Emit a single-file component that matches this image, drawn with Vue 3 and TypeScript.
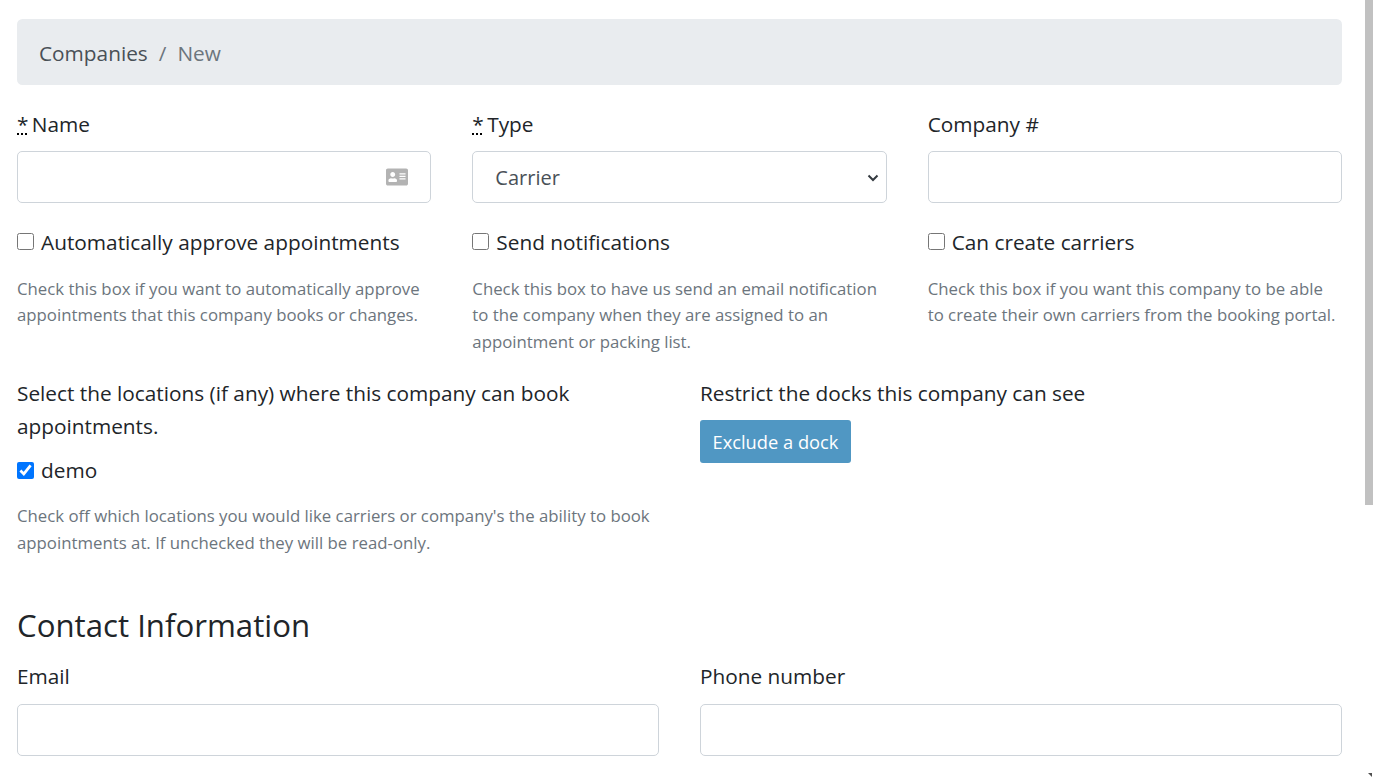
<script setup lang="ts">
const settings = [
  {
    id: 'auto',
    label: 'Automatically approve appointments',
    help: 'Check this box if you want to automatically approve appointments that this company books or changes.'
  },
  {
    id: 'notify',
    label: 'Send notifications',
    help: 'Check this box to have us send an email notification to the company when they are assigned to an appointment or packing list.'
  },
  {
    id: 'carriers',
    label: 'Can create carriers',
    help: 'Check this box if you want this company to be able to create their own carriers from the booking portal.'
  }
]
</script>

<template>
  <div class="page">
    <nav class="breadcrumb">
      <a class="crumb-link">Companies</a>
      <span class="crumb-sep">/</span>
      <span class="crumb-current">New</span>
    </nav>

    <form class="form">
      <div class="cols-3 top-fields">
        <div>
          <label class="field-label"><abbr title="required">*</abbr> Name</label>
          <div class="input-wrap">
            <input class="control" type="text" />
            <svg class="card-icon" viewBox="0 0 576 512">
              <path d="M528 32H48C21.5 32 0 53.5 0 80v352c0 26.5 21.5 48 48 48h480c26.5 0 48-21.5 48-48V80c0-26.5-21.5-48-48-48zm-352 96c35.3 0 64 28.7 64 64s-28.7 64-64 64-64-28.7-64-64 28.7-64 64-64zm112 236.8c0 10.6-10 19.2-22.4 19.2H86.4C74 384 64 375.4 64 364.8v-19.2c0-31.8 30.1-57.6 67.2-57.6h5c12.3 5.1 25.7 8 39.8 8s27.6-2.9 39.8-8h5c37.1 0 67.2 25.8 67.2 57.6v19.2zM512 312c0 4.4-3.6 8-8 8H360c-4.4 0-8-3.6-8-8v-16c0-4.4 3.6-8 8-8h144c4.4 0 8 3.6 8 8v16zm0-64c0 4.4-3.6 8-8 8H360c-4.4 0-8-3.6-8-8v-16c0-4.4 3.6-8 8-8h144c4.4 0 8 3.6 8 8v16zm0-64c0 4.4-3.6 8-8 8H360c-4.4 0-8-3.6-8-8v-16c0-4.4 3.6-8 8-8h144c4.4 0 8 3.6 8 8v16z" />
            </svg>
          </div>
        </div>
        <div>
          <label class="field-label"><abbr title="required">*</abbr> Type</label>
          <div class="input-wrap">
            <select class="control select">
              <option>Carrier</option>
            </select>
            <svg class="chevron" viewBox="0 0 12 8">
              <path d="M1.5 1.5 6 6l4.5-4.5" />
            </svg>
          </div>
        </div>
        <div>
          <label class="field-label">Company #</label>
          <input class="control" type="text" />
        </div>
      </div>

      <div class="cols-3 settings">
        <div v-for="item in settings" :key="item.id">
          <label class="check">
            <input type="checkbox" />
            <span>{{ item.label }}</span>
          </label>
          <small class="help">{{ item.help }}</small>
        </div>
      </div>

      <div class="cols-2 locations">
        <div>
          <label class="field-label">Select the locations (if any) where this company can book appointments.</label>
          <label class="check">
            <input type="checkbox" checked />
            <span>demo</span>
          </label>
          <small class="help location-help">Check off which locations you would like carriers or company's the ability to book appointments at. If unchecked they will be read-only.</small>
        </div>
        <div>
          <label class="field-label dock-label">Restrict the docks this company can see</label>
          <button class="btn" type="button">Exclude a dock</button>
        </div>
      </div>

      <h3 class="section-title">Contact Information</h3>

      <div class="cols-2">
        <div>
          <label class="field-label">Email</label>
          <input class="control" type="text" />
        </div>
        <div>
          <label class="field-label">Phone number</label>
          <input class="control" type="text" />
        </div>
      </div>
    </form>

    <div class="scrollbar"></div>
    <div class="scroll-arrow"></div>
  </div>
</template>

<style>
html,
body {
  margin: 0;
  height: 100%;
  overflow: hidden;
  background: #fff;
}
</style>

<style scoped>
.page {
  box-sizing: border-box;
  height: 779px;
  overflow: hidden;
  padding: 19px 31px 0 17px;
  font-family: "Open Sans", "Noto Sans", sans-serif;
  font-size: 20.8px;
  line-height: 33px;
  color: #212529;
}

.breadcrumb {
  display: flex;
  gap: 11px;
  height: 66px;
  box-sizing: border-box;
  padding: 18px 22px;
  margin-bottom: 22px;
  border-radius: 5.5px;
  background: #e9ecef;
}

.crumb-link {
  color: #495057;
}

.crumb-sep,
.crumb-current {
  color: #6c757d;
}

.cols-3 {
  display: grid;
  grid-template-columns: repeat(3, 1fr);
  column-gap: 41px;
}

.cols-2 {
  display: grid;
  grid-template-columns: repeat(2, 1fr);
  column-gap: 41px;
}

.top-fields {
  margin-bottom: 22px;
}

.top-fields .field-label {
  padding-top: 1px;
  margin-bottom: 10px;
}

.settings {
  margin-bottom: 22px;
}

.field-label {
  display: block;
  margin-bottom: 11px;
}

.dock-label {
  margin-bottom: 10px;
}

abbr {
  margin-right: -2px;
  text-decoration: underline dotted #000;
  text-decoration-thickness: 2px;
}

.input-wrap {
  position: relative;
}

.control {
  display: block;
  box-sizing: border-box;
  width: 100%;
  height: 52px;
  padding: 8px 22px;
  border: 1px solid #ced4da;
  border-radius: 5px;
  background: #fff;
  font: inherit;
  color: #495057;
  outline: none;
}

.select {
  appearance: none;
  font-size: 20px;
}

.card-icon {
  position: absolute;
  top: 15px;
  right: 23px;
  width: 22px;
  height: 22px;
  fill: #b3b3b3;
}

.chevron {
  position: absolute;
  top: 23px;
  right: 8px;
  width: 12px;
  height: 8px;
  fill: none;
  stroke: #343a40;
  stroke-width: 2;
}

.check {
  display: flex;
  align-items: center;
  gap: 7px;
}

.settings .check span {
  padding-top: 2px;
  line-height: 31px;
}

.check input {
  width: 17px;
  height: 17px;
  margin: 0;
  flex: none;
}

.help {
  display: block;
  margin-top: 18px;
  font-size: 16.8px;
  line-height: 26.4px;
  color: #6c757d;
}

.location-help {
  margin-top: 16px;
}

.btn {
  display: block;
  height: 43px;
  padding: 0 12.5px;
  border: 0;
  border-radius: 3px;
  background: #5097c3;
  color: #fff;
  font: inherit;
  font-size: 18.3px;
}

.section-title {
  margin: 46px 0 12px;
  font-size: 31.2px;
  line-height: 46px;
  font-weight: 400;
}

.scrollbar {
  position: absolute;
  top: 0;
  right: 0;
  width: 8px;
  height: 505px;
  background: #c1c1c1;
}

.scroll-arrow {
  position: absolute;
  top: 773px;
  right: 1px;
  width: 0;
  height: 0;
  border-left: 4px solid transparent;
  border-top: 4px solid #505050;
}
</style>
